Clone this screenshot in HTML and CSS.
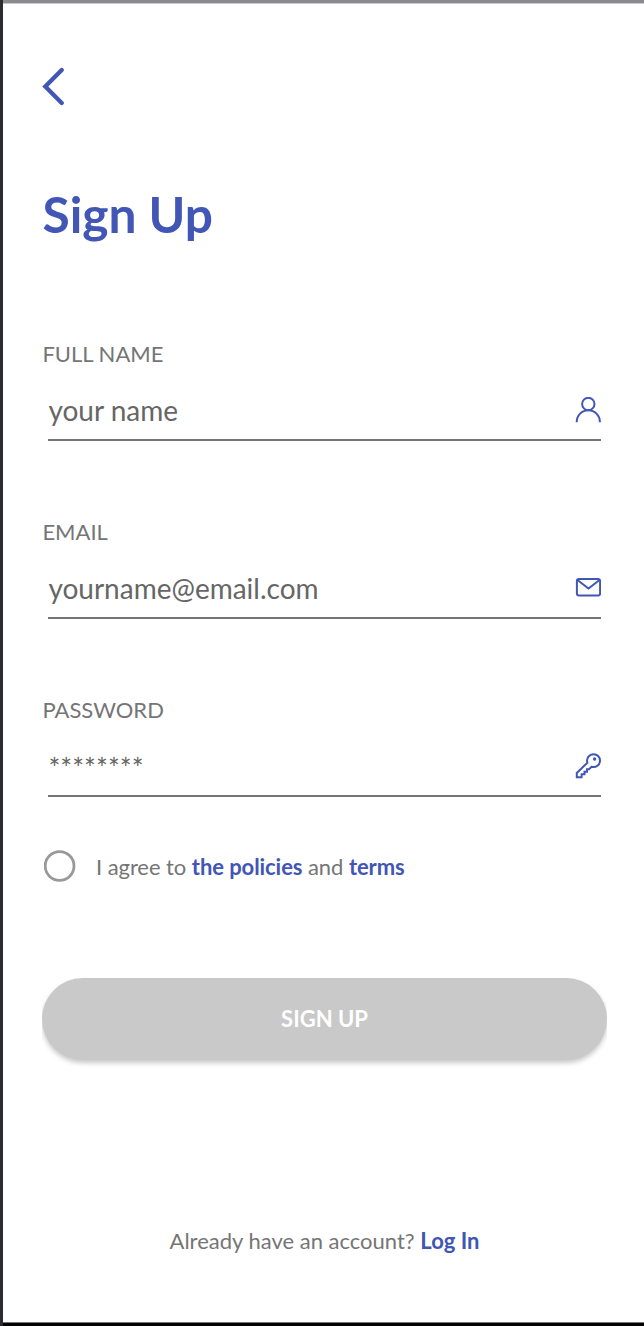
FILE: index.html
```html
<!DOCTYPE html>
<html lang="en">
<head>
<meta charset="utf-8">
<title>Sign Up</title>
<link rel="stylesheet" href="styles.css">
</head>
<body>
<main class="screen">
  <a class="back" aria-label="Back"><svg width="24" height="40" viewBox="0 0 24 40"><path d="M19.700 3 3.300 19.500 19.700 36"/></svg></a>
  <h1 class="title">Sign Up</h1>
  <form class="form">
    <div class="field">
      <label class="label">FULL NAME</label>
      <div class="control"><span class="value">your name</span>
        <svg class="icon" width="26" height="26" viewBox="0 0 26 26"><circle cx="13.300" cy="7" r="6.200"/><path d="M1.700 25.200V24.800A11.600 11.600 0 0 1 24.900 24.800V25.200"/></svg>
      </div>
    </div>
    <div class="field">
      <label class="label">EMAIL</label>
      <div class="control"><span class="value">yourname@email.com</span>
        <svg class="icon" width="26" height="26" viewBox="0 0 26 26"><rect x="1.900" y="4" width="23.200" height="16.600" rx="2"/><path d="M2.500 5 13.500 13.500 24.500 5"/></svg>
      </div>
    </div>
    <div class="field">
      <label class="label">PASSWORD</label>
      <div class="control"><span class="value password">********</span>
        <svg class="icon" width="26" height="26" viewBox="0 0 26 26"><path d="M1.800 24.200V20L12.400 9.800C11 5.200 14.200 1.200 18.700 1.200A6.400 6.400 0 0 1 25 7.500C25 12 21 15 16.500 13.800L14 16.300H12V18.800H9.500V21.300H6.600V24.200Z"/><circle class="hole" cx="19.600" cy="6" r="1.700"/></svg>
      </div>
    </div>
    <div class="agree"><svg class="radio" width="32" height="32" viewBox="0 0 32 32"><circle cx="15.600" cy="16" r="14.400"/></svg><p class="terms">I agree to <b>the policies</b> and <b>terms</b></p></div>
    <button class="submit" type="button">SIGN UP</button>
  </form>
  <p class="login">Already have an account? <b>Log In</b></p>
</main>
</body>
</html>
```
FILE: styles.css
```css
* { box-sizing: border-box; }
body { margin: 0; border-left: 3px solid #2c2b30; font-family: Lato, sans-serif; color: #757575; background: #fff; }
.screen { height: 1326px; padding: 64px 37px 0 39px; border-top: 3px solid #8b8a8f; border-bottom: 3px solid #000; box-shadow: inset 0 1px #ccc, inset 0 -1px #777; }
.back { display: block; width: 24px; height: 40px; }
.back svg { display: block; fill: none; stroke: #4156b5; stroke-width: 4.3; stroke-linecap: round; }
.title { margin: 76px 0 0 .5px; font-size: 49.7px; line-height: 62px; font-weight: 700; color: #4156b5; }
.form { margin-top: 95px; }
.field { height: 178px; }
.label { display: block; padding-left: .4px; font-size: 22px; line-height: 28px; }
.control { display: flex; justify-content: space-between; align-items: center; height: 61px; margin: 12px 6px 0; border-bottom: 2px solid #757575; }
.value { padding-left: .4px; font-size: 28px; line-height: 34px; color: #666; }
.password { padding-top: 4px; }
.icon { fill: none; stroke: #4156b5; stroke-width: 2; }
.hole { fill: #4156b5; stroke: none; }
.agree { display: flex; align-items: center; height: 36px; margin-top: -26px; }
.radio { margin: 0 20px 0 2px; fill: none; stroke: #999; stroke-width: 2.8; }
.terms { margin: 0; padding-top: 2px; font-size: 22px; line-height: 28px; letter-spacing: -.07px; }
b { color: #4156b5; font-weight: 700; }
.submit { display: block; width: 565px; height: 82.5px; margin-top: 93.5px; padding: 0; border: 0; border-radius: 42px; background: #c9c9c9; color: #fff; font: 700 22px Lato, sans-serif; box-shadow: 0 3px 5px rgba(0,0,0,.22); clip-path: inset(0 0 -10px); }
.login { margin: 167px 0 0; font-size: 22px; line-height: 28px; text-align: center; }
```
